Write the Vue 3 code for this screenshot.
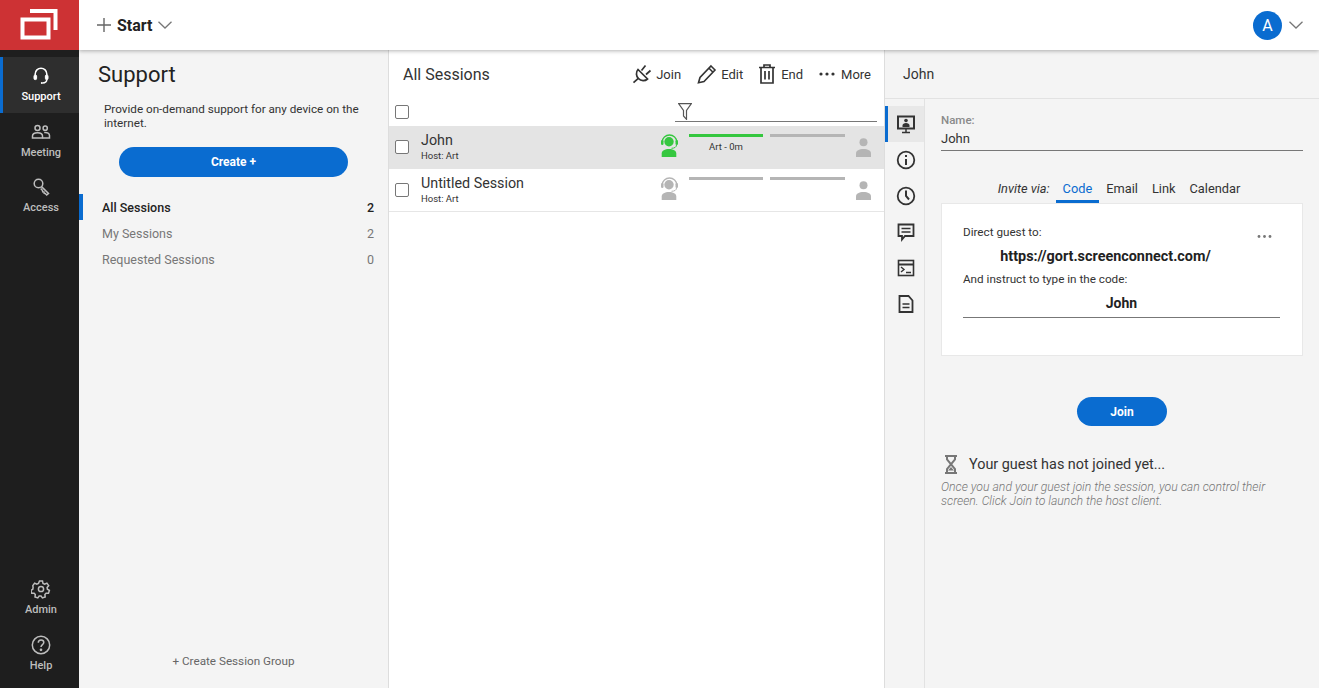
<script setup>
const navTop = [
  { label: 'Support', icon: 'headset', active: true },
  { label: 'Meeting', icon: 'people' },
  { label: 'Access', icon: 'key' },
]
const groups = [
  { name: 'All Sessions', count: 2, active: true },
  { name: 'My Sessions', count: 2 },
  { name: 'Requested Sessions', count: 0 },
]
const sessions = [
  { name: 'John', host: 'Host: Art', active: true, note: 'Art - 0m' },
  { name: 'Untitled Session', host: 'Host: Art', active: false, note: '' },
]
const tabs = ['Code', 'Email', 'Link', 'Calendar']
</script>

<template>
  <div class="app">
    <div class="logo">
      <svg viewBox="0 0 79 50" width="79" height="50" fill="none" stroke="#fff">
        <rect x="22.500" y="19.500" width="26" height="18" stroke-width="4" />
        <path d="M30 11h25.500v19" stroke-width="4" />
      </svg>
    </div>

    <header class="topbar">
      <svg class="plus" viewBox="0 0 14 14" width="14" height="14" stroke="#666" stroke-width="1.400">
        <path d="M7 0v14M0 7h14" />
      </svg>
      <span class="start">Start</span>
      <svg class="chev" viewBox="0 0 14 8" width="14" height="8" fill="none" stroke="#777" stroke-width="1.300">
        <path d="M.5.700 7 7 13.500.700" />
      </svg>
      <div class="avatar">A</div>
      <svg class="chev user-chev" viewBox="0 0 14 8" width="14" height="8" fill="none" stroke="#777" stroke-width="1.300">
        <path d="M.5.700 7 7 13.500.700" />
      </svg>
    </header>

    <nav class="sidenav">
      <div class="nav-group">
        <div v-for="item in navTop" :key="item.label" class="nav-item" :class="{ active: item.active }">
          <svg viewBox="0 0 20 20" width="20" height="20" fill="none" stroke="currentColor" stroke-width="1.500">
            <template v-if="item.icon === 'headset'">
              <path d="M4.200 9V8a5.800 5.800 0 0 1 11.600 0v1" />
              <rect x="3" y="9" width="2.600" height="4.600" rx="1.200" fill="currentColor" stroke-width="1" />
              <rect x="14.400" y="9" width="2.600" height="4.600" rx="1.200" fill="currentColor" stroke-width="1" />
              <path d="M15.800 13.600c0 2.200-1.800 3.400-4.300 3.400" />
              <circle cx="10.800" cy="17" r="1" fill="currentColor" stroke="none" />
            </template>
            <template v-else-if="item.icon === 'people'">
              <circle cx="6.500" cy="6" r="2.500" />
              <circle cx="14.200" cy="6.200" r="2.100" />
              <path d="M1.500 16v-2c0-2 2-3.300 5-3.300s5 1.300 5 3.300v2z" />
              <path d="M13.200 10.500c3.300-.4 5.300.9 5.300 3V16h-7" />
            </template>
            <template v-else>
              <circle cx="7.500" cy="6.500" r="4.300" />
              <path d="m10.500 9.600 7 6.900-1.800 1.500-1.500-1.500-1-.2-.2-1.300-1.300-.2-.2-1.300-1.800-2" />
            </template>
          </svg>
          <span>{{ item.label }}</span>
        </div>
      </div>
      <div class="nav-group">
        <div class="nav-item">
          <svg viewBox="0 0 20 20" width="20" height="20" fill="none" stroke="currentColor" stroke-width="1.500">
            <circle cx="10" cy="10" r="2.600" />
            <path d="M8.500 2h3l.5 2.400 1.700.8 2.200-1.100 1.800 2.500-1.600 1.800.3 1.800 2 1.200-.9 2.900-2.400-.1-1.200 1.400.3 2.400-2.800.9-1.400-2h-1.800l-1.400 2-2.800-.9.300-2.400-1.200-1.400-2.400.1-.9-2.900 2-1.200.3-1.800L1.800 6.600l1.800-2.500 2.200 1.100 1.700-.8z" />
          </svg>
          <span>Admin</span>
        </div>
        <div class="nav-item">
          <svg viewBox="0 0 20 20" width="20" height="20" fill="none" stroke="currentColor" stroke-width="1.500">
            <circle cx="10" cy="10" r="8.700" />
            <path d="M7.300 7.800c0-1.700 1.200-2.800 2.800-2.800s2.700 1 2.700 2.400c0 2.100-2.800 2.300-2.800 4.600" />
            <circle cx="10" cy="14.800" r=".6" />
          </svg>
          <span>Help</span>
        </div>
      </div>
    </nav>

    <main class="content">
      <aside class="groups">
        <h1>Support</h1>
        <p class="intro">Provide on-demand support for any device on the internet.</p>
        <button class="pill create">Create +</button>
        <ul class="group-list">
          <li v-for="g in groups" :key="g.name" :class="{ active: g.active }">
            <span>{{ g.name }}</span>
            <span>{{ g.count }}</span>
          </li>
        </ul>
        <div class="new-group">+ Create Session Group</div>
      </aside>

      <section class="sessions">
        <div class="sessions-head">
          <h2>All Sessions</h2>
          <div class="actions">
            <span class="action">
              <svg viewBox="0 0 20 20" width="20" height="20" fill="none" stroke="#333" stroke-width="1.700">
                <path d="M6 5.500 15.500 15c-2.500 2.300-6.500 2.200-9-.3S3.700 8 6 5.500zM9.500 6.500l4-5M14 10.500l4.500-4M6 14.700 1.500 18.700" />
              </svg>
              Join
            </span>
            <span class="action">
              <svg viewBox="0 0 20 20" width="20" height="20" fill="none" stroke="#333" stroke-width="1.600">
                <path d="M14 2 18 6 7 17.500l-5.500 1.200L3 13.500zM12 4.200l4 4" />
              </svg>
              Edit
            </span>
            <span class="action end">
              <svg viewBox="0 0 16 20" width="16" height="20" fill="none" stroke="#333" stroke-width="1.700">
                <path d="M0 3.500h16M5 3.500V1h6v2.500M2 3.500v15.500h12V3.500M6 7v8.500M10 7v8.500" />
              </svg>
              End
            </span>
            <span class="action more">
              <svg viewBox="0 0 16 4" width="16" height="4" fill="#333">
                <circle cx="2" cy="2" r="1.600" /><circle cx="8" cy="2" r="1.600" /><circle cx="14" cy="2" r="1.600" />
              </svg>
              More
            </span>
          </div>
        </div>
        <div class="filter-row">
          <span class="check"></span>
          <div class="filter">
            <svg viewBox="0 0 14 17" width="14" height="17" fill="none" stroke="#555" stroke-width="1.200">
              <path d="M.6.600h12.800L8.500 7.500v8.800L5.500 13V7.500z" />
            </svg>
          </div>
        </div>
        <div v-for="s in sessions" :key="s.name" class="session" :class="{ active: s.active }">
          <span class="check"></span>
          <div class="session-name">
            <div class="title">{{ s.name }}</div>
            <div class="host">{{ s.host }}</div>
          </div>
          <svg class="host-icon" viewBox="0 0 20 24" width="20" height="24">
            <g :fill="s.active ? '#35c73f' : '#b5b5b5'" :stroke="s.active ? '#35c73f' : '#b5b5b5'">
              <path d="M2.300 7.500a7.200 6.500 0 0 1 14.400 0" fill="none" stroke-width="1.300" />
              <rect x="1" y="6" width="2.500" height="5" rx="1.200" stroke="none" />
              <rect x="15.500" y="6" width="2.500" height="5" rx="1.200" stroke="none" />
              <circle cx="9" cy="7.700" r="4.700" stroke="none" />
              <path d="M16.500 11c0 2-2 3.300-5 3.300" fill="none" stroke-width="1" />
              <path d="M1.700 23v-3.500c0-3 3.300-4.500 7.300-4.500s7.300 1.500 7.300 4.500V23z" stroke="none" />
            </g>
          </svg>
          <div class="bars">
            <div class="bar-col first">
              <div class="bar" :class="{ on: s.active }"></div>
              <div class="note">{{ s.note }}</div>
            </div>
            <div class="bar-col">
              <div class="bar"></div>
            </div>
          </div>
          <svg class="guest-icon" viewBox="0 0 15 19" width="15" height="19" fill="#b5b5b5">
            <circle cx="7.500" cy="4.300" r="4" />
            <path d="M0 19v-3.500C0 12.500 3 11 7.500 11s7.500 1.500 7.500 4.500V19z" />
          </svg>
        </div>
      </section>

      <section class="detail">
        <div class="detail-head">John</div>
        <div class="detail-body">
          <div class="rail">
            <div class="rail-item active">
              <svg viewBox="0 0 20 20" width="20" height="20" fill="none" stroke="#333" stroke-width="2">
                <rect x="2" y="2.500" width="16" height="12" />
                <path d="M10 15v3M6 18.500h8" stroke-width="1.500" />
                <circle cx="10" cy="6.500" r="1.800" fill="#333" stroke="none" />
                <path d="M6.500 13v-1.500c0-1.500 1.500-2.500 3.500-2.500s3.500 1 3.500 2.500V13z" fill="#333" stroke="none" />
              </svg>
            </div>
            <div class="rail-item">
              <svg viewBox="0 0 20 20" width="20" height="20" fill="none" stroke="#333" stroke-width="1.800">
                <circle cx="10" cy="10" r="8.300" />
                <path d="M10 9v6M10 5v2" stroke-width="2" />
              </svg>
            </div>
            <div class="rail-item">
              <svg viewBox="0 0 20 20" width="20" height="20" fill="none" stroke="#333" stroke-width="1.800">
                <circle cx="10" cy="10" r="8.300" />
                <path d="M10 4.500V10l3 3.500" stroke-width="2" />
              </svg>
            </div>
            <div class="rail-item">
              <svg viewBox="0 0 20 20" width="20" height="20" fill="none" stroke="#333" stroke-width="1.800">
                <path d="M2.500 2.500h15v11.500H9l-3 3.500V14H2.500z" />
                <path d="M5.500 6.500h9M5.500 10h9" stroke-width="1.500" />
              </svg>
            </div>
            <div class="rail-item">
              <svg viewBox="0 0 20 20" width="20" height="20" fill="none" stroke="#333" stroke-width="1.600">
                <rect x="2.500" y="2.500" width="15" height="15" />
                <path d="M2.500 6.500h15" stroke-width="2" />
                <path d="m5 9 3 2.500L5 14M10 14.500h5" stroke-width="1.400" />
              </svg>
            </div>
            <div class="rail-item">
              <svg viewBox="0 0 20 20" width="20" height="20" fill="none" stroke="#333" stroke-width="1.800">
                <path d="M3.500 2h9l4 4.500V18h-13z" />
                <path d="M6.500 10h7M6.500 13.500h7" stroke-width="1.600" />
              </svg>
            </div>
          </div>

          <div class="detail-main">
            <div class="field-label">Name:</div>
            <div class="field-value">John</div>

            <div class="tabs">
              <span class="invite">Invite via:</span>
              <span v-for="(t, i) in tabs" :key="t" class="tab" :class="{ active: i === 0 }">{{ t }}</span>
            </div>

            <div class="invite-card">
              <div class="card-line first">
                <span>Direct guest to:</span>
                <svg class="dots" viewBox="0 0 15 3" width="15" height="3" fill="#777">
                  <circle cx="2" cy="1.500" r="1.400" /><circle cx="7.500" cy="1.500" r="1.400" /><circle cx="13" cy="1.500" r="1.400" />
                </svg>
              </div>
              <div class="url">https://gort.screenconnect.com/</div>
              <div class="card-line">And instruct to type in the code:</div>
              <div class="code">John</div>
            </div>

            <button class="pill join">Join</button>

            <div class="wait">
              <svg viewBox="0 0 12 19" width="12" height="19" fill="none" stroke="#777" stroke-width="2">
                <path d="M0 1h12M0 18h12M2 1v3.500L10 14v4M10 1v3.500L2 14v4" />
                <path d="M3 15.500h6L6 12z" fill="#777" stroke="none" />
              </svg>
              <span>Your guest has not joined yet...</span>
            </div>
            <p class="hint">Once you and your guest join the session, you can control their screen. Click Join to launch the host client.</p>
          </div>
        </div>
      </section>
    </main>
  </div>
</template>

<style>
html,
body {
  margin: 0;
  height: 100%;
  overflow: hidden;
}
</style>

<style scoped>
.app {
  display: grid;
  grid-template-columns: 79px 1fr;
  grid-template-rows: 50px 1fr;
  height: 100vh;
  font-family: Roboto, "Liberation Sans", sans-serif;
  color: #222;
  background: #fff;
}

.logo {
  background: #cd3234;
  position: relative;
  z-index: 3;
}

.logo svg {
  display: block;
}

.topbar {
  display: flex;
  align-items: center;
  padding-left: 18px;
  background: #fff;
  box-shadow: 0 1px 4px rgba(0, 0, 0, 0.3);
  position: relative;
  z-index: 2;
}

.start {
  margin-left: 6px;
  font-size: 16px;
  font-weight: 700;
  color: #222;
}

.chev {
  margin-left: 5px;
}

.avatar {
  margin-left: auto;
  width: 29px;
  height: 29px;
  border-radius: 50%;
  background: #0a6cd0;
  color: #fff;
  font-size: 16px;
  display: flex;
  align-items: center;
  justify-content: center;
}

.user-chev {
  margin: 0 16px 0 7px;
}

.sidenav {
  background: #1e1e1e;
  display: flex;
  flex-direction: column;
  justify-content: space-between;
  padding: 7px 0 7px;
  position: relative;
  z-index: 3;
}

.nav-item {
  height: 55.500px;
  box-sizing: border-box;
  padding: 9px 0 0 3px;
  display: flex;
  flex-direction: column;
  align-items: center;
  gap: 4px;
  color: #bdbdbd;
  font-size: 11px;
  font-weight: 500;
}

.nav-item.active {
  background: #2e2e2e;
  color: #fff;
  box-shadow: inset 3px 0 0 #0a6cd0;
}

.content {
  display: grid;
  grid-template-columns: 310px 496px 1fr;
  min-height: 0;
}

.groups {
  background: #f4f4f4;
  border-right: 1px solid #ddd;
  display: flex;
  flex-direction: column;
  min-height: 0;
}

h1 {
  margin: 12px 0 0 19px;
  font-size: 22px;
  line-height: 26px;
  font-weight: 400;
  color: #222;
}

.intro {
  margin: 14px 13px 0 25px;
  font-size: 11.700px;
  line-height: 14px;
  color: #333;
}

.pill {
  border: 0;
  background: #0a6cd0;
  color: #fff;
  font-family: inherit;
  font-size: 12px;
  font-weight: 700;
  border-radius: 15px;
  height: 30px;
  padding: 0;
}

.create {
  width: 229px;
  margin: 17px 0 0 40px;
}

.group-list {
  list-style: none;
  margin: 17px 0 0;
  padding: 0;
}

.group-list li {
  height: 26px;
  padding: 0 14px 0 23px;
  display: flex;
  align-items: center;
  justify-content: space-between;
  font-size: 12.500px;
  color: #777;
}

.group-list li.active {
  color: #222;
  font-weight: 500;
  box-shadow: inset 4px 0 0 #0a6cd0;
}

.new-group {
  margin-top: auto;
  padding-bottom: 20px;
  text-align: center;
  font-size: 11.700px;
  color: #666;
}

.sessions {
  border-right: 1px solid #ddd;
  background: #fff;
  min-height: 0;
}

.sessions-head {
  height: 48px;
  display: flex;
  align-items: center;
  justify-content: space-between;
  padding: 0 13px 0 14px;
}

h2 {
  margin: 0;
  font-size: 16px;
  font-weight: 400;
  color: #333;
}

.actions {
  display: flex;
  gap: 16px;
}

.action {
  display: flex;
  align-items: center;
  gap: 4px;
  font-size: 13px;
  color: #333;
}

.action.end,
.action.more {
  gap: 6px;
}

.check {
  display: block;
  width: 12px;
  height: 12px;
  border: 1px solid #777;
  border-radius: 2px;
  background: #fff;
  flex: none;
}

.filter-row {
  height: 28px;
  display: flex;
  align-items: center;
  justify-content: space-between;
  padding: 0 7px 0 6px;
}

.filter {
  width: 202px;
  height: 24px;
  align-self: flex-start;
  box-sizing: border-box;
  border-bottom: 1px solid #777;
  padding: 5px 0 0 3px;
}

.filter svg {
  display: block;
}

.session {
  height: 43px;
  box-sizing: border-box;
  display: flex;
  align-items: center;
  padding-left: 6px;
  border-bottom: 1px solid #e6e6e6;
}

.session.active {
  background: #e4e4e4;
  border-bottom-color: #e4e4e4;
}

.session-name {
  margin-left: 12px;
  width: 239px;
}

.title {
  font-size: 14.300px;
  line-height: 16px;
  color: #333;
}

.host {
  font-size: 9.500px;
  line-height: 12px;
  margin-top: 2px;
  color: #333;
}

.host-icon {
  flex: none;
  align-self: flex-start;
  margin-top: 8px;
}

.bars {
  margin-left: 9px;
  align-self: flex-start;
  padding-top: 8px;
  display: flex;
  gap: 7px;
}

.bar-col {
  width: 75px;
}

.bar-col.first {
  width: 74px;
}

.bar {
  height: 3px;
  background: #b5b5b5;
}

.bar.on {
  background: #35c73f;
}

.note {
  margin-top: 4px;
  text-align: center;
  font-size: 9.500px;
  line-height: 11px;
  color: #333;
}

.guest-icon {
  margin-left: 11px;
  align-self: flex-start;
  margin-top: 12px;
  flex: none;
}

.detail {
  background: #f4f4f4;
  display: flex;
  flex-direction: column;
  min-height: 0;
}

.detail-head {
  height: 49px;
  box-sizing: border-box;
  border-bottom: 1px solid #e2e2e2;
  padding: 16px 0 0 18px;
  font-size: 14px;
  line-height: 16px;
  color: #333;
}

.detail-body {
  flex: 1;
  display: flex;
  min-height: 0;
}

.rail {
  width: 40px;
  box-sizing: border-box;
  border-right: 1px solid #e2e2e2;
  padding-top: 7px;
}

.rail-item {
  height: 36px;
  padding-left: 2px;
  display: flex;
  align-items: center;
  justify-content: center;
}

.rail-item.active {
  background: #e8e8e8;
  box-shadow: inset 3px 0 0 #0a6cd0;
}

.detail-main {
  flex: 1;
  padding: 14px 16px 0 16px;
  min-width: 0;
}

.field-label {
  font-size: 11.500px;
  line-height: 14px;
  color: #8a8a8a;
  font-weight: 500;
}

.field-value {
  margin-top: 4px;
  padding-bottom: 4px;
  font-size: 13px;
  line-height: 15px;
  color: #333;
  border-bottom: 1px solid #777;
}

.tabs {
  margin-top: 30px;
  padding-left: 1px;
  display: flex;
  justify-content: center;
  align-items: flex-end;
  font-size: 12.800px;
  color: #333;
}

.invite {
  font-style: italic;
  padding: 0 6px 7px 0;
  line-height: 15px;
}

.tab {
  padding: 0 7px 4px;
  line-height: 15px;
  border-bottom: 3px solid transparent;
}

.tab.active {
  color: #0a6cd0;
  border-bottom-color: #0a6cd0;
}

.invite-card {
  background: #fff;
  border: 1px solid #e8e8e8;
  height: 153px;
  box-sizing: border-box;
  padding: 21px 22px 0 21px;
}

.card-line {
  font-size: 11.700px;
  line-height: 14px;
  color: #333;
}

.card-line.first {
  display: flex;
  justify-content: space-between;
  align-items: flex-start;
}

.dots {
  margin: 10px 8px 0 0;
}

.url {
  margin: 9px 32px 0 0;
  text-align: center;
  font-size: 14.400px;
  line-height: 18px;
  font-weight: 700;
  color: #222;
}

.url + .card-line {
  margin-top: 6px;
}

.code {
  margin-top: 9px;
  padding-bottom: 5px;
  text-align: center;
  font-size: 14px;
  line-height: 17px;
  font-weight: 700;
  color: #222;
  border-bottom: 1px solid #777;
}

.join {
  display: block;
  width: 90px;
  height: 29px;
  margin: 41px auto 0;
}

.wait {
  margin-top: 29px;
  display: flex;
  align-items: center;
  gap: 12px;
  padding-left: 4px;
  font-size: 14.400px;
  color: #333;
}

.hint {
  margin: 6px 0 0;
  font-size: 12.250px;
  line-height: 14px;
  font-style: italic;
  font-weight: 300;
  color: #777;
}
</style>
